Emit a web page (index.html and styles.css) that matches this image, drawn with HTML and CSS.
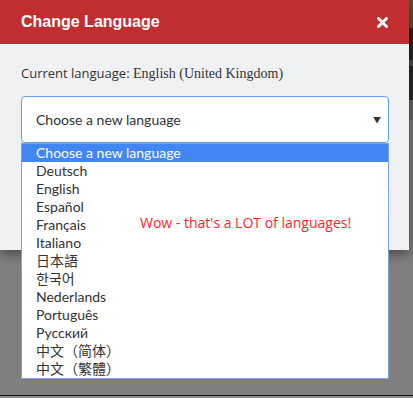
FILE: index.html
```html
<!DOCTYPE html>
<html lang="en">
<head>
    <meta charset="UTF-8">
    <meta name="viewport" content="width=device-width, initial-scale=1.0">
    <title>Change Language</title>
    <link rel="stylesheet" href="styles.css">
</head>
<body>

    <!-- Pantalla con el modal abierto -->
    <div class="screen">
        <div class="modal">
            <div class="modal-header">
                <h2>Change Language</h2>
                <span class="close">
                    <svg width="11" height="11" viewBox="0 0 11 11"><path d="M1.5 1.5 L9.5 9.5 M9.5 1.5 L1.5 9.5" stroke="#fff" stroke-width="3" stroke-linecap="round"/></svg>
                </span>
            </div>
            <div class="modal-body">
                <p class="current">Current language: <span class="lang">English (United Kingdom)</span></p>
                <div class="select-wrap">
                    <div class="select">
                        <span>Choose a new language</span>
                        <span class="arrow">&#9660;</span>
                    </div>
                    <ul class="options">
                        <li class="selected">Choose a new language</li>
                        <li>Deutsch</li>
                        <li>English</li>
                        <li>Español</li>
                        <li>Français</li>
                        <li>Italiano</li>
                        <li>日本語</li>
                        <li>한국어</li>
                        <li>Nederlands</li>
                        <li>Português</li>
                        <li>Русский</li>
                        <li>中文（简体）</li>
                        <li>中文（繁體）</li>
                    </ul>
                    <p class="note">Wow - that's a LOT of languages!</p>
                </div>
            </div>
            <div class="modal-footer">
                <span class="btn"></span>
            </div>
        </div>
        <div class="side"></div>
    </div>
    <div class="taskbar"></div>

</body>
</html>
```

FILE: styles.css
```css
/* Estilo global */
* {
    margin: 0;
    padding: 0;
    box-sizing: border-box;
}

body {
    background-color: #7f7f7f;
    font-family: 'Lato', 'Noto Sans CJK SC', sans-serif;
    color: #333;
    overflow: hidden;
}

.screen {
    display: flex;
    align-items: flex-start;
    height: 395px;
}

/* Modal */
.modal {
    width: 409px;
    flex-shrink: 0;
    background-color: #f0f1f3;
    box-shadow: 0 3px 12px rgba(0, 0, 0, 0.5);
    position: relative;
    z-index: 2;
}

.modal-header {
    height: 44px;
    background-color: #c02e2f;
    display: flex;
    align-items: center;
    justify-content: space-between;
    padding: 0 21px;
}

.modal-header h2 {
    font-family: 'Liberation Sans', Arial, sans-serif;
    font-size: 16px;
    font-weight: bold;
    color: #fff;
}

.close {
    display: flex;
    margin-top: 1px;
}

.modal-body {
    padding: 19px 20px 0 21px;
}

.current {
    font-family: 'Open Sans', sans-serif;
    font-size: 13px;
    height: 20px;
    line-height: 20px;
    margin-bottom: 13px;
}

.current .lang {
    font-family: 'Liberation Serif', 'Times New Roman', serif;
    font-size: 14px;
}

.select-wrap {
    position: relative;
}

.select {
    height: 47px;
    background-color: #fff;
    border: 1px solid #5ea4ec;
    border-radius: 4px;
    display: flex;
    align-items: center;
    justify-content: space-between;
    padding: 0 7px 0 14px;
    font-size: 14px;
}

.arrow {
    font-size: 8px;
    color: #333;
}

/* Lista desplegada */
.options {
    list-style: none;
    position: absolute;
    top: 47px;
    left: 0;
    width: 368px;
    background-color: #fff;
    border: 1px solid #7f9fe0;
    z-index: 3;
}

.options li {
    height: 18px;
    line-height: 18px;
    padding-left: 14px;
    font-size: 14px;
    color: #333;
    white-space: nowrap;
}

.options li.selected {
    background-color: #4286f4;
    color: #fff;
}

.note {
    position: absolute;
    top: 117px;
    left: 119px;
    z-index: 4;
    font-family: 'Open Sans', sans-serif;
    font-size: 14px;
    color: #ff1f2d;
    white-space: nowrap;
}

.modal-footer {
    height: 107px;
    display: flex;
    justify-content: flex-end;
    align-items: center;
    padding-right: 18px;
    padding-top: 11px;
}

.btn {
    width: 60px;
    height: 30px;
    background-color: #f6f7f8;
    border: 1px solid #e2e3e5;
    border-radius: 3px;
}

/* Fondo oscurecido a la derecha */
.side {
    flex: 1;
    height: 120px;
    background: linear-gradient(#56563f 0, #56563f 28px, #262626 28px, #262626 60px, #4d4d4d 60px, #4d4d4d 66px, #2a2a2a 66px, #2a2a2a 100px, #6a6a6a 100px);
}

.taskbar {
    height: 3px;
    border-top: 1px solid #111;
    background-color: #8d8d8d;
}
```
